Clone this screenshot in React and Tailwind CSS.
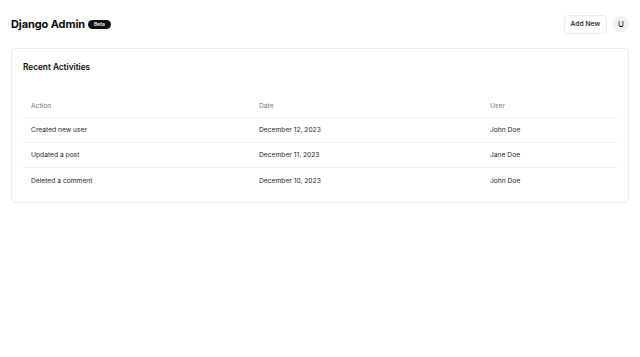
import React from "react";

const rows = [
  { action: "Created new user", date: "December 12, 2023", user: "John Doe" },
  { action: "Updated a post", date: "December 11, 2023", user: "Jane Doe" },
  { action: "Deleted a comment", date: "December 10, 2023", user: "John Doe" },
];

export default function App() {
  return (
    <div
      className="min-h-[357px] w-full bg-white text-[#111827]"
      style={{ fontFamily: "Inter, 'Liberation Sans', sans-serif" }}
    >
      <header className="flex h-[47px] items-center justify-between px-[11px] pt-[1px]">
        <div className="flex items-center gap-[3px]">
          <h1 className="text-[11px] font-bold leading-none tracking-[-0.1px] text-[#0a0a0a]">
            Django Admin
          </h1>
          <span className="flex h-[9px] items-center rounded-full bg-[#111111] px-[6px] text-[5px] font-semibold leading-none text-white">
            Beta
          </span>
        </div>
        <div className="flex items-center gap-[6px]">
          <button className="flex h-[19px] items-center rounded-[4px] border border-[#ececec] bg-white px-[6px] text-[6.75px] font-medium leading-none text-[#111]">
            Add New
          </button>
          <div className="flex h-[16px] w-[16px] items-center justify-center rounded-full bg-[#f1f1f1] text-[8px] leading-none text-[#111]">
            U
          </div>
        </div>
      </header>
      <main className="px-[11px] pt-[1px]">
        <div className="rounded-[4px] border border-[#ebebeb] bg-white px-[11px] pb-[10px] pt-[13px]">
          <h2 className="h-[12px] text-[8.25px] font-semibold leading-[10px] text-[#0a0a0a]">
            Recent Activities
          </h2>
          <table className="mt-[19px] w-full border-collapse text-left text-[6.7px]">
            <thead>
              <tr className="h-[24px] border-b border-[#efefef]">
                <th className="w-[228px] px-[8px] pt-[2px] font-normal text-[#777777]">Action</th>
                <th className="w-[231px] px-[8px] pt-[2px] font-normal text-[#777777]">Date</th>
                <th className="px-[8px] pt-[2px] font-normal text-[#777777]">User</th>
              </tr>
            </thead>
            <tbody>
              {rows.map((r, i) => (
                <tr
                  key={i}
                  className={
                    "h-[25px] " + (i < rows.length - 1 ? "border-b border-[#efefef]" : "")
                  }
                >
                  <td className="px-[8px] pt-[2px] text-[#262626]">{r.action}</td>
                  <td className="px-[8px] pt-[2px] text-[#262626]">{r.date}</td>
                  <td className="px-[8px] pt-[2px] text-[#262626]">{r.user}</td>
                </tr>
              ))}
            </tbody>
          </table>
        </div>
      </main>
    </div>
  );
}
